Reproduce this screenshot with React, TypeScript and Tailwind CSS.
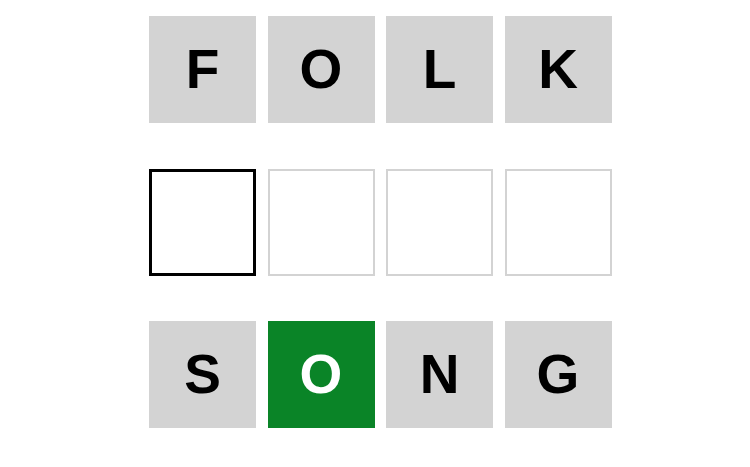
// App.tsx
import React from "react";

type TileState = "filled" | "correct" | "active" | "empty";

interface TileProps {
  letter?: string;
  state: TileState;
}

const Tile: React.FC<TileProps> = ({ letter, state }) => {
  const styles: Record<TileState, string> = {
    filled: "bg-[#d3d3d3] text-black",
    correct: "bg-[#0a8427] text-white",
    active: "bg-white border-[3px] border-black",
    empty: "bg-white border-2 border-[#d3d3d3]",
  };

  return (
    <div
      className={`w-[107px] h-[107px] flex items-center justify-center text-[55px] font-bold leading-none ${styles[state]}`}
    >
      {letter}
    </div>
  );
};

const rows: { letter?: string; state: TileState }[][] = [
  [
    { letter: "F", state: "filled" },
    { letter: "O", state: "filled" },
    { letter: "L", state: "filled" },
    { letter: "K", state: "filled" },
  ],
  [{ state: "active" }, { state: "empty" }, { state: "empty" }, { state: "empty" }],
  [
    { letter: "S", state: "filled" },
    { letter: "O", state: "correct" },
    { letter: "N", state: "filled" },
    { letter: "G", state: "filled" },
  ],
];

export default function App() {
  return (
    <div
      className="w-[750px] h-[467px] bg-white overflow-hidden"
      style={{ fontFamily: '"Liberation Sans", Arial, sans-serif' }}
    >
      <div className="pt-[16px] pl-[149px] flex flex-col gap-[45.5px]">
        {rows.map((row, i) => (
          <div key={i} className="grid grid-cols-[repeat(4,107px)] gap-x-[11.5px]">
            {row.map((tile, j) => (
              <Tile key={j} letter={tile.letter} state={tile.state} />
            ))}
          </div>
        ))}
      </div>
    </div>
  );
}
